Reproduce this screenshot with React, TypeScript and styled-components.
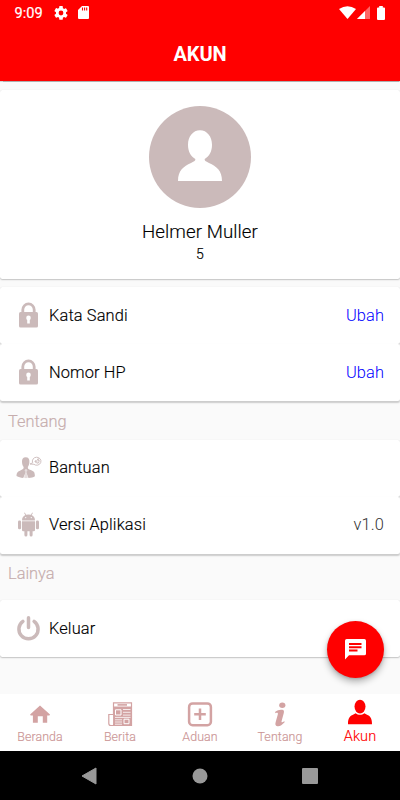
import React from "react";
import styled, { createGlobalStyle } from "styled-components";

const muted = "#cbbaba";
const rose = "#d3a3a3";

const GlobalStyle = createGlobalStyle`
  * { box-sizing: border-box; }
  body { margin: 0; background: #fafafa; font-family: Roboto, "Liberation Sans", sans-serif; }
  svg { display: block; flex: none; }
`;

const Screen = styled.div`
  width: 400px;
  height: 800px;
  display: flex;
  flex-direction: column;
  overflow: hidden;
  position: relative;
  background: #fafafa;
`;

const Header = styled.header`
  height: 81px;
  flex: none;
  background: #ff0000;
  color: #fff;
  box-shadow: 0 0.5px 1px rgba(0, 0, 0, 0.3);
`;

const StatusBar = styled.div`
  height: 25px;
  display: flex;
  align-items: center;
  justify-content: space-between;
  padding: 0 15px 0 14.5px;
`;

const StatusGroup = styled.div<{ $gap: number }>`
  display: flex;
  align-items: center;
  gap: ${(p) => p.$gap}px;
`;

const BatterySlot = styled.div`
  padding-left: 5.5px;
`;

const Clock = styled.span`
  font-size: 14.6px;
  line-height: 26px;
  font-weight: 400;
  width: 28px;
  margin-right: 1px;
  white-space: nowrap;
  -webkit-text-stroke: 0.2px currentColor;
`;

const Title = styled.h1`
  margin: 0;
  height: 56px;
  line-height: 58px;
  text-align: center;
  font-size: 20px;
  font-weight: 700;
  letter-spacing: -0.1px;
`;

const Content = styled.main`
  height: 613px;
  flex: none;
  padding-top: 9px;
`;

const Card = styled.section`
  background: #fff;
  border-radius: 2.5px;
  box-shadow: 0 1px 1.5px rgba(0, 0, 0, 0.22), 0 0 1px rgba(0, 0, 0, 0.1);
`;

const Profile = styled(Card)`
  height: 188.5px;
  padding-top: 16px;
  margin-bottom: 8.5px;
  display: flex;
  flex-direction: column;
  align-items: center;
`;

const Name = styled.div`
  margin-top: 12px;
  font-size: 18.7px;
  line-height: 25px;
  font-weight: 300;
  color: #000;
  letter-spacing: 0.08px;
  -webkit-text-stroke: 0.15px currentColor;
`;

const Count = styled.div`
  margin-top: -1px;
  font-size: 14px;
  line-height: 20px;
  color: #000;
  font-weight: 300;
  -webkit-text-stroke: 0.2px currentColor;
`;

const Row = styled(Card)`
  height: 56.75px;
  display: flex;
  align-items: center;
  padding: 0 16px 0 14px;

  & + & { box-shadow: 0 1.5px 1.5px rgba(0, 0, 0, 0.19); }
`;

const RowLabel = styled.span<{ $raised?: boolean }>`
  flex: 1;
  margin-left: 5px;
  padding-top: ${(p) => (p.$raised ? 0 : 1)}px;
  font-size: 16.4px;
  line-height: 24px;
  font-weight: 300;
  letter-spacing: 0.12px;
  color: #000;
  -webkit-text-stroke: 0.15px currentColor;
`;

const RowValue = styled.span<{ $link?: boolean }>`
  padding-top: ${(p) => (p.$link ? 1 : 0)}px;
  font-size: 16.4px;
  line-height: 24px;
  font-weight: 300;
  letter-spacing: 0.1px;
  color: ${(p) => (p.$link ? "#0000ff" : "#333")};
`;

const SectionTitle = styled.h2`
  margin: 0;
  height: 39.5px;
  padding-left: 8px;
  font-size: 16.4px;
  line-height: 41px;
  font-weight: 300;
  letter-spacing: 0;
  color: #c6adad;
  -webkit-text-stroke: 0.15px currentColor;
`;

const SecondTitle = styled(SectionTitle)`
  height: 46.5px;
  line-height: 40px;
`;

const ChatButton = styled.button`
  position: absolute;
  left: 326.5px;
  top: 620.5px;
  width: 57px;
  height: 57px;
  padding: 0;
  border: 0;
  border-radius: 50%;
  background: #ff0000;
  box-shadow: 0 4px 7px rgba(0, 0, 0, 0.28), 0 1px 3px rgba(0, 0, 0, 0.15);
  display: flex;
  align-items: center;
  justify-content: center;
`;

const Tabs = styled.nav`
  height: 57px;
  flex: none;
  background: #fff;
  display: flex;
`;

const Tab = styled.div<{ $active?: boolean }>`
  flex: 1;
  display: flex;
  flex-direction: column;
  align-items: center;
  padding-top: ${(p) => (p.$active ? 4 : 6)}px;
  font-size: ${(p) => (p.$active ? 14.5 : 12.4)}px;
  line-height: 18px;
  font-weight: 300;
  letter-spacing: 0.1px;
  color: ${(p) => (p.$active ? "#ff0000" : "#cc9696")};
  -webkit-text-stroke: 0.15px currentColor;
`;

const TabText = styled.span<{ $active?: boolean }>`
  margin-top: ${(p) => (p.$active ? 2 : 0)}px;
`;

const SystemNav = styled.div`
  height: 49px;
  flex: none;
  background: #000;
  display: grid;
  grid-template-columns: 110px 110px 110px;
  justify-content: center;
  justify-items: center;
  align-items: center;
`;

const Gear = () => (
  <svg width="14" height="14" viewBox="2 2 20 20" fill="#fff">
    <path d="M19.14 12.94a7 7 0 0 0 0-1.88l2.03-1.58a.5.5 0 0 0 .12-.61l-1.92-3.32a.5.5 0 0 0-.59-.22l-2.39.96a7 7 0 0 0-1.62-.94l-.36-2.54A.5.5 0 0 0 13.93 2h-3.84a.5.5 0 0 0-.48.41l-.36 2.54a7 7 0 0 0-1.62.94l-2.39-.96a.5.5 0 0 0-.59.22L2.73 8.87a.5.5 0 0 0 .12.61l2.03 1.58a7 7 0 0 0 0 1.88l-2.03 1.58a.5.5 0 0 0-.12.61l1.92 3.32c.12.22.37.3.59.22l2.39-.96c.5.38 1.03.7 1.62.94l.36 2.54c.05.24.25.41.48.41h3.84c.24 0 .44-.17.48-.41l.36-2.54a7 7 0 0 0 1.62-.94l2.39.96c.22.08.47 0 .59-.22l1.92-3.32a.5.5 0 0 0-.12-.61zM12 15.4a3.4 3.4 0 1 1 0-6.8 3.4 3.4 0 0 1 0 6.8z" />
  </svg>
);

const SdCard = () => (
  <svg width="11" height="13" viewBox="0 0 11 13">
    <path d="M4 0h6q1 0 1 1v11q0 1-1 1H1q-1 0-1-1V4z" fill="#fff" />
    <path d="M4.5 1.5v3M6.6 1.5v3M8.7 1.5v3" stroke="#f00" strokeWidth="1.1" />
  </svg>
);

const Wifi = () => (
  <svg width="17" height="13" viewBox="0 0 17 13">
    <path d="M0 3Q8.500-2.500 17 3L8.500 13z" fill="#fff" />
  </svg>
);

const Signal = () => (
  <svg width="13" height="13" viewBox="0 0 13 13">
    <path d="M0 13 13 0v13z" fill="#ff6666" />
    <path d="M0 13 8 5v8z" fill="#fff" />
  </svg>
);

const Battery = () => (
  <svg width="8" height="14" viewBox="0 0 8 14">
    <path d="M2.200 0h3.600v1.400H7q1 0 1 1V13q0 1-1 1H1q-1 0-1-1V2.400q0-1 1-1h1.200z" fill="#fff" />
  </svg>
);

const Avatar = () => (
  <svg width="102" height="102" viewBox="0 0 102 102">
    <circle cx="51" cy="51" r="51" fill={muted} />
    <path
      d="M51 24.300c7 0 12 6.200 12 14.500 0 6.600-2.500 11.400-7.300 14.300-.4 1.500.8 2.300 4.300 3.800C67.500 60.500 73 64 73 75H29c0-11 5.500-14.500 13-18.100 3.500-1.500 4.700-2.300 4.300-3.800C41.500 50.200 39 45.400 39 38.800c0-8.300 5-14.500 12-14.500z"
      fill="#fff"
    />
  </svg>
);

const Lock = () => (
  <svg width="30" height="30" viewBox="0 0 30 30">
    <path d="M8.800 14V9.800a5.700 5.900 0 0 1 11.400 0V14" fill="none" stroke={muted} strokeWidth="2.800" />
    <rect x="5" y="12" width="19" height="15.500" rx="1.600" fill={muted} />
    <circle cx="14.500" cy="17.900" r="2.300" fill="#fff" />
    <path d="M13.200 18h2.600v5.600h-2.600z" fill="#fff" />
  </svg>
);

const Support = () => (
  <svg width="30" height="30" viewBox="0 0 30 30">
    <path
      d="M11.700 4.200c2.700 0 3.900 1.700 3.700 4.600 0 2.400-.7 4-1.600 5.200l.3 1.800c2 1.300 5.700 2.100 6.300 4 .4 1.300.4 2.300.5 3.400-1.400.9-3.600 1.600-6.400 1.800l-2.600-5.800-2.700 5.800c-2.600-.2-4.700-.9-6.700-1.900.1-1.200.1-2.300.7-3.300 1-1.700 4.300-2.600 6.100-4l.4-1.800C8.600 12.800 8 11 8 8.800c-.2-2.900 1.100-4.600 3.700-4.600z"
      fill={muted}
    />
    <path d="m11.500 16-1 1.700 1 1.100-1.500 5.700 2 .7 2-.7-1.500-5.700 1-1.100-1-1.700z" fill="#e6dddd" />
    <path d="M18.700 9.800 16 11l3.900.3a4.300 4 0 1 0-1.200-1.500z" fill="#fff" stroke={muted} strokeWidth=".9" />
    <path d="m20.800 9 .8-1.500v2.200m1.200.4V7.700l1.500-2.200v2h1l-.8 2.500z" fill="none" stroke={muted} strokeWidth=".9" />
  </svg>
);

const Android = () => (
  <svg width="30" height="30" viewBox="0 0 30 30" fill={muted}>
    <path d="M8 10.400c0-2.600 1.400-4.300 3.300-5.300L10.100 3l.7-.4 1.300 2.200a8 8 0 0 1 4.800 0l1.300-2.200.7.400-1.200 2.100c1.900 1 3.300 2.700 3.300 5.300z" />
    <circle cx="11.700" cy="7.600" r=".65" fill="#fff" />
    <circle cx="17.300" cy="7.600" r=".65" fill="#fff" />
    <path d="M8 11.200h13v8.700q0 1.300-1.300 1.300h-1.100v3.900q0 1.500-1.500 1.500t-1.500-1.500v-3.900h-2.200v3.900q0 1.500-1.500 1.500t-1.500-1.500v-3.900H9.300Q8 21.200 8 19.900z" />
    <rect x="4" y="10.600" width="3.100" height="8.700" rx="1.400" />
    <rect x="21.900" y="10.600" width="3.100" height="8.700" rx="1.400" />
  </svg>
);

const Power = () => (
  <svg width="30" height="30" viewBox="0 0 30 30" fill="none" stroke={muted} strokeWidth="3.500" strokeLinecap="round">
    <path d="M8.900 8.400a9.600 9.600 0 1 0 11.200 0M14.500 4.700v9.800" />
  </svg>
);

const Chat = () => (
  <svg width="21" height="21" viewBox="0 0 21 21">
    <path d="M1.700 0h17.600Q21 0 21 1.700v13q0 1.600-1.700 1.600H4L0 20.500V1.700Q0 0 1.700 0z" fill="#fff" />
    <path d="M4 5h12.500M4 8.300h12.500M4 11.500h8.500" stroke="#f00" strokeWidth="1.900" />
  </svg>
);

const Home = () => (
  <svg width="30" height="28" viewBox="0 0 30 28">
    <path d="m15 5.500 10 9.100-.6.900h-2.200v7.200h-4.400v-6.500h-5v6.500H7.900v-7.200H5.700l-.6-.9z" fill={rose} />
  </svg>
);

const News = () => (
  <svg width="30" height="28" viewBox="0 0 30 28" fill="none" stroke={rose}>
    <path d="M8.500 2.800H26.500v22.700H5.800q-2 0-2-2V14.500h4.700z" strokeWidth="1.200" />
    <path d="M8.500 7h18v18.500h-18z" fill={rose} />
    <path d="M12.500 4.900h9.500" strokeWidth="1.600" />
    <path d="M10.500 9.800h5.500v5.200h-5.500zM19 19.200h5v4.500h-5z" fill={rose} stroke="#fff" />
    <path d="M18 9.500h7.500M18 12.300h7.500M18 15.100h7.500M10 17.400h15.500M10 19.800h7M10 22h7M10 24.200h7M7.600 15v9" stroke="#fff" strokeWidth=".8" />
  </svg>
);

const Add = () => (
  <svg width="30" height="28" viewBox="0 0 30 28" fill="none" stroke={rose}>
    <rect x="4.100" y="3.400" width="21.800" height="21.800" rx="3.500" strokeWidth="2.500" />
    <path d="M15 8.500V20M9.200 14.300h11.600" strokeWidth="2.500" />
  </svg>
);

const Info = () => (
  <svg width="30" height="28" viewBox="0 0 30 28" fill={rose}>
    <ellipse cx="17.300" cy="5.200" rx="3.100" ry="2.700" />
    <path d="M10 12.100c2.500-2 4.700-2.600 7.100-2.300 1.800.2 2.200 1.400 1.700 3.200l-2.100 7.700c-.5 2 .1 2.200 2.500.5l.6.900c-2.800 3.300-5.300 4.500-7.400 4.100-2.300-.3-2.300-2-1.700-4.200l2.100-7.400c.5-2.100-.6-2.100-2.200-1.400z" />
  </svg>
);

const Person = () => (
  <svg width="30" height="28" viewBox="0 0 30 28" fill="#f00">
    <ellipse cx="15" cy="8.600" rx="5.500" ry="6.800" />
    <path d="M3 26.200c0-5.200 1.200-7.700 4.500-9.200l3.200-1.700c1.300 1 2.700 1.500 4.300 1.500s3-.5 4.300-1.500l3.200 1.700c3.300 1.500 4.500 4 4.500 9.200z" />
  </svg>
);

export default function App() {
  return (
    <>
      <GlobalStyle />
      <Screen>
        <Header>
          <StatusBar>
            <StatusGroup $gap={10.200}>
              <Clock>9:09</Clock>
              <Gear />
              <SdCard />
            </StatusGroup>
            <StatusGroup $gap={1.5}>
              <Wifi />
              <Signal />
              <BatterySlot>
                <Battery />
              </BatterySlot>
            </StatusGroup>
          </StatusBar>
          <Title>AKUN</Title>
        </Header>
        <Content>
          <Profile>
            <Avatar />
            <Name>Helmer Muller</Name>
            <Count>5</Count>
          </Profile>
          <Row><Lock /><RowLabel>Kata Sandi</RowLabel><RowValue $link>Ubah</RowValue></Row>
          <Row><Lock /><RowLabel>Nomor HP</RowLabel><RowValue $link>Ubah</RowValue></Row>
          <SectionTitle>Tentang</SectionTitle>
          <Row><Support /><RowLabel $raised>Bantuan</RowLabel></Row>
          <Row><Android /><RowLabel $raised>Versi Aplikasi</RowLabel><RowValue>v1.0</RowValue></Row>
          <SecondTitle>Lainya</SecondTitle>
          <Row><Power /><RowLabel>Keluar</RowLabel></Row>
        </Content>
        <Tabs>
          <Tab><Home /><TabText>Beranda</TabText></Tab>
          <Tab><News /><TabText>Berita</TabText></Tab>
          <Tab><Add /><TabText>Aduan</TabText></Tab>
          <Tab><Info /><TabText>Tentang</TabText></Tab>
          <Tab $active><Person /><TabText $active>Akun</TabText></Tab>
        </Tabs>
        <SystemNav>
          <svg width="18" height="18" viewBox="0 0 18 18"><path d="M15 1v16L1 9z" fill="#999" stroke="#999" /></svg>
          <svg width="16" height="16" viewBox="0 0 16 16"><circle cx="8" cy="8" r="7.500" fill="#999" /></svg>
          <svg width="16" height="16" viewBox="0 0 16 16"><rect width="16" height="16" rx="1" fill="#999" /></svg>
        </SystemNav>
        <ChatButton aria-label="Chat"><Chat /></ChatButton>
      </Screen>
    </>
  );
}
